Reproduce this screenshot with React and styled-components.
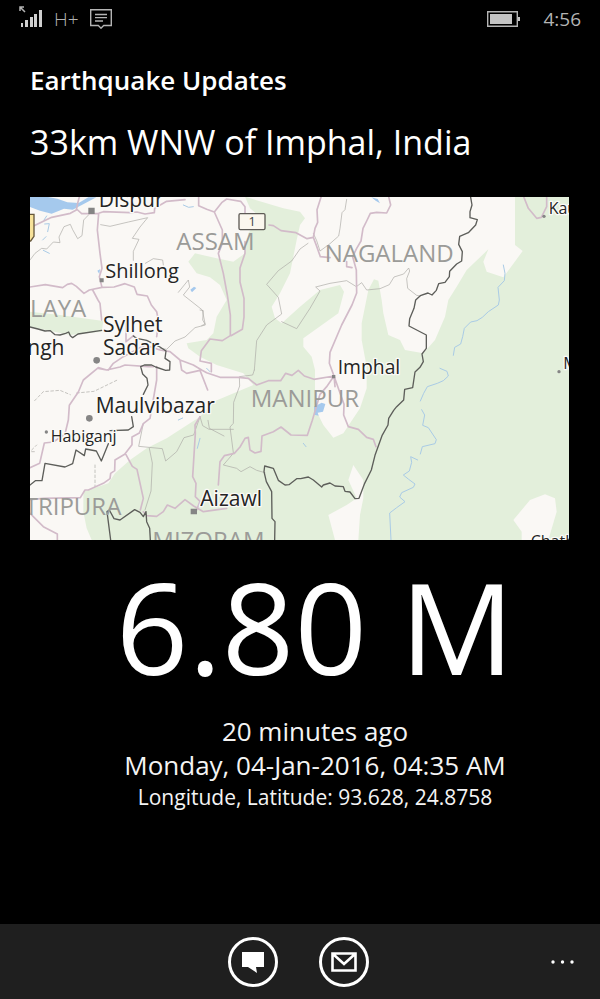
import React from "react";
import styled, { createGlobalStyle } from "styled-components";

const GlobalStyle = createGlobalStyle`
  * { box-sizing: border-box; }
  body {
    margin: 0;
    background: #000;
    color: #fff;
    font-family: "Open Sans", "Noto Sans", sans-serif;
  }
`;

const Screen = styled.div`
  min-height: 100vh;
  display: flex;
  flex-direction: column;
  background: #000;
`;

const StatusBar = styled.header`
  display: flex;
  align-items: center;
  justify-content: space-between;
  height: 38px;
  padding: 0 19px;
  color: #b4b4b4;
`;

const StatusGroup = styled.div`
  display: flex;
  align-items: center;
  gap: ${(p) => p.$gap}px;
`;

const StatusText = styled.span`
  font-size: 19px;
  line-height: 24px;
  font-weight: ${(p) => p.$weight || 400};
`;

const Main = styled.main`
  flex: 1;
  display: flex;
  flex-direction: column;
  padding: 24px 0 0 30px;
`;

const AppTitle = styled.h1`
  margin: 0;
  font-size: 26px;
  line-height: 36px;
  font-weight: 600;
`;

const Place = styled.h2`
  margin: 18px 0 0;
  font-size: 34px;
  line-height: 52px;
  font-weight: 400;
`;

const MapFrame = styled.figure`
  margin: 29px 31px 0 0;
  line-height: 0;
`;

const MapSvg = styled.svg`
  display: block;
  width: 100%;
  height: auto;
  background: #faf8f5;
  font-family: "Open Sans", "Noto Sans", sans-serif;
`;

const Details = styled.section`
  display: flex;
  flex-direction: column;
  align-items: center;
  text-align: center;
`;

const Magnitude = styled.p`
  margin: 18px 0 20px;
  font-size: 127px;
  line-height: 136px;
`;

const Detail = styled.p`
  margin: 0;
  font-size: ${(p) => p.$size}px;
  line-height: ${(p) => p.$line}px;
  color: #f4f4f4;
`;

const AppBar = styled.nav`
  display: grid;
  grid-template-columns: 1fr auto 1fr;
  align-items: center;
  height: 75px;
  padding: 0 24px 0 20px;
  background: #1f1f1f;
`;

const Actions = styled.div`
  grid-column: 2;
  display: flex;
  gap: 41px;
`;

const RoundButton = styled.button`
  display: grid;
  place-items: center;
  width: 50px;
  height: 50px;
  padding: 0;
  border: 3px solid #fff;
  border-radius: 50%;
  background: transparent;
  color: #fff;
  cursor: pointer;
`;

const MoreButton = styled.button`
  justify-self: end;
  padding: 8px 2px;
  border: 0;
  background: transparent;
  color: #fff;
  cursor: pointer;
`;

const Icon = styled.svg`
  display: block;
`;

const Line = styled.path`
  fill: none;
  stroke-linejoin: round;
  stroke-linecap: round;
`;
const Road = styled(Line)`
  stroke: #d2bbc9;
  stroke-width: 5;
`;
const District = styled(Line)`
  stroke: #aaa9a5;
  stroke-width: 2;
`;
const Border = styled(Line)`
  stroke: #5d5e5a;
  stroke-width: 4;
`;
const River = styled(Line)`
  stroke: #a9cbe6;
  stroke-width: 3;
`;
const Region = styled.text`
  font-size: 72px;
  fill: #9b9b98;
`;
const Town = styled.text`
  font-size: ${(p) => p.$size}px;
  fill: #242424;
  stroke: #fbfaf7;
  stroke-width: 8px;
  stroke-linejoin: round;
  paint-order: stroke;
`;

function SignalIcon() {
  return (
    <Icon width="24" height="26" viewBox="0 0 24 26" aria-label="Signal" role="img">
      <path d="M1 5V1h4M1 1l5 5" fill="none" stroke="#b4b4b4" strokeWidth="1.5" />
      <path d="M2 17h2v4H2zM6 14h3v7H6zM11 11h3v10h-3zM15 8h3v13h-3zM20 4h3v17h-3z" fill="#cfcfcf" />
    </Icon>
  );
}

function MessageIcon() {
  return (
    <Icon width="22" height="20" viewBox="0 0 22 20" aria-label="Message" role="img">
      <path d="M.7.7h20.6v15.8h-7.6L11 19.2l-2.7-2.7H.7z" fill="none" stroke="#b4b4b4" strokeWidth="1.4" />
      <path d="M5 5.5h12M5 8.7h12M5 12h8" stroke="#b4b4b4" strokeWidth="1.3" />
    </Icon>
  );
}

function BatteryIcon() {
  return (
    <Icon width="33" height="16" viewBox="0 0 33 16" aria-label="Battery" role="img">
      <path d="M.7.7h29.6v14.6H.7z" fill="none" stroke="#b4b4b4" strokeWidth="1.4" />
      <path d="M3 3h22v10H3zM31 6h2v4h-2z" fill="#c4c4c4" />
    </Icon>
  );
}

function QuakeMap() {
  return (
    <MapSvg viewBox="30 21 1617 1029" role="img" aria-label="Map of the area around Imphal">
      <path
        fill="#e3efdb"
        d="M675 20L790 55L840 65L855 85L840 105L830 150L810 250L780 310L755 350L765 385L785 400L840 350L900 300L960 285L972 305L955 370L850 445L850 470L875 500L885 540V655L910 705L940 743L970 730L1020 655L1040 595V530L1025 450V400L1045 300L1062 268L1075 272L1085 330L1090 370L1105 435L1140 450L1155 480L1210 490L1245 450L1275 380L1285 330L1310 290L1340 240L1405 178L1390 215L1400 245L1450 262L1508 183L1485 165V20H1647V1050H215L200 1015L190 965V905L265 880L285 850L330 810L380 775L440 745L540 680L580 635L700 585L670 550L590 525L540 500L505 475L500 460L560 450L580 430L590 380L620 330L600 285L570 262L530 250L505 215L525 190L590 205L640 215L675 190L685 130L720 80L690 55Z"
      />
      <path fill="#e3efdb" d="M30 365L120 375L250 393L245 425L150 435L30 410Z" />
      <path fill="#faf8f5" d="M1000 825L1030 870V925L1020 975L1015 1050H945L925 975L980 945L1010 925L985 870Z" />
      <path fill="#faf8f5" d="M1480 990L1530 930L1575 913L1605 925L1610 965L1585 1050H1505V1025Z" />

      <path fill="#a5c9ed" d="M30 21H84L112 26L142 37L176 39L205 22H229L184 46L158 59L132 56L95 71L60 62L30 51ZM882 650L905 638L916 642L909 665L893 668L896 677L883 674ZM511 299L522 290L529 294L516 307ZM1054 22L1073 27L1080 40L1067 32ZM232 242L240 238L238 252Z" />
      <River d="M80 78L72 90M74 102L88 101L83 125M68 150L78 140M70 181L88 190M490 45L506 52L520 50M540 745L532 775M850 760L858 770M560 535L570 545M475 690L488 684M1450 225L1455 250L1453 272L1434 292L1438 330L1435 345L1405 365L1387 382L1371 392L1352 396L1333 415L1328 440L1322 462L1304 472L1300 496M1260 535L1281 544L1285 558L1270 572L1252 580L1222 590L1211 610L1201 633M1205 659L1214 675L1208 706L1225 713L1249 749L1245 761L1207 770L1201 792M1193 810L1172 800L1175 817L1168 843L1150 855L1166 868L1185 882L1180 892L1145 908L1139 921L1155 935L1130 953L1109 969L1113 1050" />

      <District d="M30 210L45 190L65 175L80 177L100 156L120 158L117 141L132 110L151 103L158 119L173 146L186 137L191 90L215 65M242 104L270 109L325 96L383 83L360 111L337 145L357 148L340 184V211M376 220L400 206L428 210L430 225M475 307L505 270L509 291L490 315L547 360L556 405L525 413L495 441L465 453L440 478L420 475M980 28L975 59L966 68L960 115L956 138L930 161L900 183L890 152L880 130M864 160L840 177L815 213L775 242L740 283L775 322L785 372L740 405L710 452L703 540M785 395L830 416L870 355L900 303L887 291L930 280L980 272L1009 290L1025 278L1040 300L1080 296L1108 284L1122 261L1151 252L1166 234L1169 243L1160 266L1163 295L1190 316L1200 318M703 540L698 555L658 560L659 588L641 637L640 700L630 711L640 788M540 680L548 707L567 718H640M564 691L568 715L612 738M540 680L521 735L492 743L470 785L437 813L427 776L356 769L370 700M388 775L397 819L393 903L375 960M640 790L610 825L650 835L663 845L690 830L710 841L735 848M540 360L550 362L548 390L555 402L545 407" />
      <District strokeDasharray="8 7" d="M44 632L70 605L120 601L151 614M170 609L222 604L292 570M225 825V890M35 780L50 765M35 785H50" />

      <Road d="M30 113L95 82L151 70L169 60L173 40L178 21M173 60L185 71L236 70L250 65L330 68L351 66L375 72L403 68L404 55L440 34L495 29M536 21V47L560 58L583 66L605 38L620 27L662 34L675 50V90M583 66L607 120V160L595 190L610 250L622 315L631 375V437L607 452L570 447L544 482L540 513L574 520V545M747 105L760 107L783 122L828 128L861 146L880 142L885 115L893 97L891 59L903 22M880 142L889 166L901 200L930 203M675 155V190L660 234V276L672 325V381L667 418L633 437M1106 20L1112 45L1100 69L1070 67L1051 70L1040 93L1029 115L1023 153L1010 175L998 200L1009 240L1010 309L996 345L965 405L930 487L928 520L942 558M980 215V230L996 233M236 70L232 120L240 190L246 235L238 260L246 292L282 291L315 281L343 291L351 313L382 318L394 345L410 365L416 395L410 440M246 292L208 300L192 310L169 289L155 280L142 283L128 293L76 284L30 291M218 300L234 330L240 340L245 390M318 400V455L341 437M400 530H385L315 525L300 531L260 540L235 533L190 570L175 606L148 646L145 690L135 732L100 756L73 759L59 820L30 833M235 535L260 540M265 540L280 520L310 500L375 465L420 480L450 485L480 510L520 525L545 540L560 548L600 562L655 562L685 565L710 585L745 572H782L797 550L816 556L835 541L853 558L882 568L942 558M480 510L485 540L500 550L540 541L563 600M410 530V570L390 685L370 701L358 729L336 741V764L314 793L285 810L284 842L272 850L270 866L250 880L205 900H195L181 923L70 925L30 929M318 794L337 829L351 838L370 925L361 960M540 680L525 705L526 730L518 860L528 880L526 920L540 934L530 960M370 965L380 977L410 979L430 965L442 945L465 955L495 929L521 948L550 965L620 955M595 885L600 815L613 797L643 790L660 771L675 745L685 742L690 780L705 789L723 784L726 738L760 725L783 711L813 735L862 736L877 691L900 613L920 590L942 558M942 558L972 643L971 675L985 710L1015 718L1040 742L1060 748L1068 770M942 558L945 590M30 970L70 1010L112 1032V1050M1511 20L1525 55L1550 85L1564 82L1580 50V20" />

      <Border d="M30 411L54 417L75 423L91 422L105 434L120 435L137 430L146 426L151 437L158 443L174 432L245 421M340 438L350 445L380 451L420 471L438 483L435 505L450 515L449 540L437 541L407 531L395 525L373 525L362 530L368 552L381 565L384 585L370 613M335 680L340 710L325 720L270 722M265 761L244 813L229 783L197 777L193 797L168 780L158 821L135 831L75 820L66 872H46L30 885M272 1050L261 965L268 960L282 986L300 990L344 959L360 967L370 980L378 965L380 995L389 1015L391 1050M1352 22L1356 45L1350 65V83L1372 89L1367 105L1345 128L1319 139L1316 163L1327 185L1325 213L1310 222L1289 244L1288 260L1275 277L1256 281L1249 301L1236 315L1224 309L1201 317L1187 330L1182 355L1169 386L1167 408L1219 435V475L1206 492L1210 515L1200 532L1185 546L1178 593L1154 598L1151 630L1130 650L1121 661L1106 685L1104 705L1086 737L1065 796L1054 840L1034 880L1017 925L1005 926L990 906L975 904L970 890L945 888L930 879L910 885L905 891L880 870L865 861L842 866H830L807 884L795 885L775 871L760 835L734 828L732 845L739 875L755 905L756 985L765 995L764 1050" />

      <path fill="#f7e29a" stroke="#66583c" strokeWidth="4" d="M26 73H42V139L32 153H26" />
      <rect x="657" y="71" width="78" height="48" rx="4" fill="#fbf7ee" stroke="#5e5b56" strokeWidth="4" />
      <text x="696" y="109" fontSize="38" textAnchor="middle" fill="#444">1</text>

      <g fill="#858585">
        <path d="M205 53h19v19h-19zM239 265h12v12h-12zM512 956h19v17h-19zM936 555h10v10h-10z" />
        <circle cx="230" cy="511" r="10" />
        <circle cx="208" cy="685" r="10" />
        <circle cx="79" cy="726" r="5" />
        <circle cx="1572" cy="79" r="5" />
        <circle cx="1617" cy="545" r="5" />
      </g>

      <Region x="469" y="181">ASSAM</Region>
      <Region x="914" y="216">NAGALAND</Region>
      <Region x="30" y="380">LAYA</Region>
      <Region x="692" y="652">MANIPUR</Region>
      <Region x="14" y="975">TRIPURA</Region>
      <Region x="397" y="1076">MIZORAM</Region>

      <Town $size={63} x="236" y="50">Dispur</Town>
      <Town $size={60} x="256" y="264">Shillong</Town>
      <Town $size={63} x="249" y="427">Sylhet</Town>
      <Town $size={63} x="249" y="496">Sadar</Town>
      <Town $size={63} x="22" y="494">ngh</Town>
      <Town $size={63} x="227" y="670">Maulvibazar</Town>
      <Town $size={48} x="92" y="756">Habiganj</Town>
      <Town $size={58} x="953" y="553">Imphal</Town>
      <Town $size={63} x="541" y="949">Aizawl</Town>
      <Town $size={48} x="1586" y="72">Kau</Town>
      <Town $size={48} x="1630" y="537">M</Town>
      <Town $size={48} x="1532" y="1070">Chatha</Town>
    </MapSvg>
  );
}

export default function App() {
  return (
    <>
      <GlobalStyle />
      <Screen>
        <StatusBar>
          <StatusGroup $gap={11}>
            <SignalIcon />
            <StatusText $weight={300}>H+</StatusText>
            <MessageIcon />
          </StatusGroup>
          <StatusGroup $gap={23}>
            <BatteryIcon />
            <StatusText>4:56</StatusText>
          </StatusGroup>
        </StatusBar>
        <Main>
          <AppTitle>Earthquake Updates</AppTitle>
          <Place>33km WNW of Imphal, India</Place>
          <MapFrame>
            <QuakeMap />
          </MapFrame>
          <Details>
            <Magnitude>6.80 M</Magnitude>
            <Detail $size={26} $line={34}>20 minutes ago</Detail>
            <Detail $size={26} $line={34}>Monday, 04-Jan-2016, 04:35 AM</Detail>
            <Detail $size={21} $line={30}>Longitude, Latitude: 93.628, 24.8758</Detail>
          </Details>
        </Main>
        <AppBar>
          <Actions>
            <RoundButton type="button" aria-label="Message">
              <Icon width="22" height="22" viewBox="0 0 22 22">
                <path d="M0 1h22v15h-8l1 6-9-6H0z" fill="currentColor" />
              </Icon>
            </RoundButton>
            <RoundButton type="button" aria-label="Email">
              <Icon width="26" height="20" viewBox="0 0 26 20">
                <path d="M1.5 1.5h23v17h-23zM2 2l11 10L24 2" fill="none" stroke="currentColor" strokeWidth="2.6" />
              </Icon>
            </RoundButton>
          </Actions>
          <MoreButton type="button" aria-label="More">
            <Icon width="23" height="4" viewBox="0 0 23 4">
              <g fill="currentColor">
                <circle cx="2" cy="2" r="1.7" />
                <circle cx="11.5" cy="2" r="1.7" />
                <circle cx="21" cy="2" r="1.7" />
              </g>
            </Icon>
          </MoreButton>
        </AppBar>
      </Screen>
    </>
  );
}
